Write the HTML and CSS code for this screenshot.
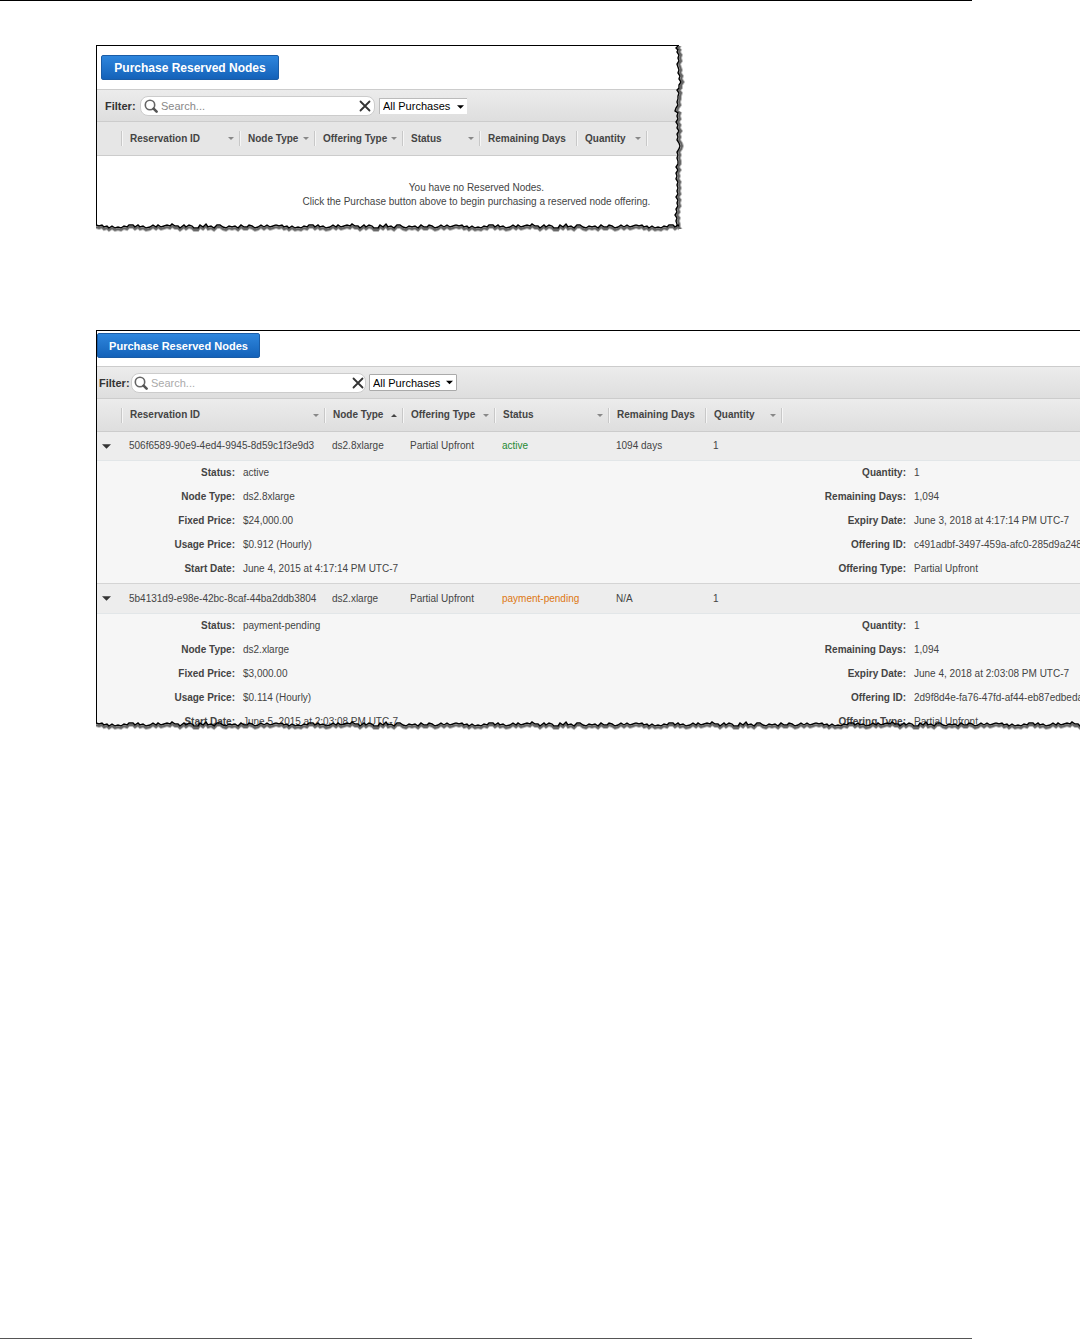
FILE: index.html
```html
<!DOCTYPE html>
<html lang="en">
<head>
<meta charset="utf-8">
<title>Reserved Nodes</title>
<link rel="stylesheet" href="styles.css">
</head>
<body>
<svg class="defs" aria-hidden="true">
  <defs>
    <path id="zig-h" d="M0 4 L3 5 6 4 8 6 11 5 13 7 16 5 19 7 22 6 25 7 28 5 31 6 33 4 37 4 39 6 42 4 44 6 47 5 50 7 54 6 57 4 60 6 62 4 65 6 68 5 71 4 74 5 76 3 79 5 82 5 84 7 88 4 90 6 93 4 96 5 98 7 102 7 104 4 107 6 110 3 112 6 115 5 118 7 121 4 124 4 127 6 130 7 133 5 136 6 139 5 142 7 145 4 148 6 151 6 153 4 156 5 159 7 162 6 165 4 168 6 171 4 174 6 177 5 180 4"/>
    <pattern id="torn-h" width="180" height="16" patternUnits="userSpaceOnUse">
      <path class="paper" d="M0 4 L13 7 54 6 90 6 118 7 145 6 180 4 V16 H0 Z"/>
      <use href="#zig-h" class="tear-shade-soft" y="3"/>
      <use href="#zig-h" class="tear-shade" y="2"/>
      <use href="#zig-h" class="tear"/>
    </pattern>
    <path id="zig-v" d="M4 0 L2 2 4 4 3 6 5 9 4 12 5 15 3 18 4 21 5 24 4 27 6 30 5 33 7 36 5 39 5 42 3 44 5 47 4 50 4 53 3 56 4 59 2 62 1 65 4 67 3 70 4 73 2 76 4 79 3 82 5 85 3 88 4 91 3 94 5 97 6 100 5 103 3 106 4 109 3 112 4 115 4 118 2 121 4 124 2 127 3 130 2 133 4 136 3 139 4 142 3 145 4 148 2 151 4 154 3 157 4 160 2 163 3 166 1 169 3 172 2 175 3 178 3 181 5 184"/>
    <pattern id="torn-v" width="12" height="184" patternUnits="userSpaceOnUse">
      <path class="paper" d="M4 0 L5 24 6 38 3 56 4 79 5 100 3 121 3 145 2 169 4 184 H12 V0 Z"/>
      <use href="#zig-v" class="tear-shade-soft" x="3"/>
      <use href="#zig-v" class="tear-shade" x="2"/>
      <use href="#zig-v" class="tear"/>
    </pattern>
    <symbol id="lens" viewBox="0 0 14 14">
      <circle cx="6" cy="6" r="4.7" fill="#fff" stroke="#666" stroke-width="1.6"/>
      <path d="M9.6 9.6 L12.6 12.6" stroke="#555" stroke-width="2.6" stroke-linecap="round"/>
    </symbol>
    <symbol id="cross" viewBox="0 0 12 12">
      <path d="M1.5 1.5 L10.5 10.5 M10.5 1.5 L1.5 10.5" stroke="#333" stroke-width="1.8" stroke-linecap="round"/>
    </symbol>
    <symbol id="down" viewBox="0 0 8 4"><path d="M0 0 H8 L4 4 Z" fill="currentColor"/></symbol>
    <symbol id="up" viewBox="0 0 8 4"><path d="M0 4 H8 L4 0 Z" fill="currentColor"/></symbol>
  </defs>
</svg>

<main class="page">
  <section class="panel panel-empty">
    <div class="actions"><button class="purchase" type="button">Purchase Reserved Nodes</button></div>
    <form class="toolbar">
      <label class="filter-label" for="search-a">Filter:</label>
      <div class="search">
        <svg class="lens"><use href="#lens"/></svg>
        <input id="search-a" type="text" placeholder="Search...">
        <button class="clear" type="button" aria-label="Clear"><svg><use href="#cross"/></svg></button>
      </div>
      <div class="picker">
        <select aria-label="Purchases"><option>All Purchases</option></select>
        <svg class="picker-arrow"><use href="#down"/></svg>
      </div>
    </form>
    <table class="grid">
      <colgroup><col class="w24"><col class="w118"><col class="w75"><col class="w88"><col class="w77"><col class="w97"><col class="w70"><col></colgroup>
      <thead>
        <tr>
          <td></td>
          <th><span class="head">Reservation ID<svg class="caret"><use href="#down"/></svg></span></th>
          <th><span class="head">Node Type<svg class="caret"><use href="#down"/></svg></span></th>
          <th><span class="head">Offering Type<svg class="caret"><use href="#down"/></svg></span></th>
          <th><span class="head">Status<svg class="caret"><use href="#down"/></svg></span></th>
          <th><span class="head">Remaining Days</span></th>
          <th><span class="head">Quantity<svg class="caret"><use href="#down"/></svg></span></th>
          <td><span class="head"></span></td>
        </tr>
      </thead>
      <tbody>
        <tr><td class="empty" colspan="8">You have no Reserved Nodes.<br>Click the Purchase button above to begin purchasing a reserved node offering.</td></tr>
      </tbody>
    </table>
    <svg class="edge-right"><rect width="12" height="100%" fill="url(#torn-v)"/></svg>
    <svg class="edge-bottom"><rect width="100%" height="16" fill="url(#torn-h)"/></svg>
  </section>

  <section class="panel panel-list">
    <div class="actions"><button class="purchase" type="button">Purchase Reserved Nodes</button></div>
    <form class="toolbar">
      <label class="filter-label" for="search-b">Filter:</label>
      <div class="search">
        <svg class="lens"><use href="#lens"/></svg>
        <input id="search-b" type="text" placeholder="Search...">
        <button class="clear" type="button" aria-label="Clear"><svg><use href="#cross"/></svg></button>
      </div>
      <div class="picker">
        <select aria-label="Purchases"><option>All Purchases</option></select>
        <svg class="picker-arrow"><use href="#down"/></svg>
      </div>
    </form>
    <table class="grid">
      <colgroup><col class="w24"><col class="w203"><col class="w78"><col class="w92"><col class="w114"><col class="w97"><col class="w76"><col></colgroup>
      <thead>
        <tr>
          <td></td>
          <th><span class="head">Reservation ID<svg class="caret"><use href="#down"/></svg></span></th>
          <th><span class="head">Node Type<svg class="caret sorted"><use href="#up"/></svg></span></th>
          <th><span class="head">Offering Type<svg class="caret"><use href="#down"/></svg></span></th>
          <th><span class="head">Status<svg class="caret"><use href="#down"/></svg></span></th>
          <th><span class="head">Remaining Days</span></th>
          <th><span class="head">Quantity<svg class="caret"><use href="#down"/></svg></span></th>
          <td><span class="head"></span></td>
        </tr>
      </thead>
      <tbody>
        <tr class="node">
          <td><button class="toggle" type="button" aria-label="Collapse"><svg><use href="#down"/></svg></button></td>
          <td>506f6589-90e9-4ed4-9945-8d59c1f3e9d3</td><td>ds2.8xlarge</td><td>Partial Upfront</td>
          <td class="ok">active</td><td>1094 days</td><td>1</td><td></td>
        </tr>
        <tr class="details">
          <td colspan="8">
            <div class="facts">
              <dl>
                <dt>Status:</dt><dd>active</dd>
                <dt>Node Type:</dt><dd>ds2.8xlarge</dd>
                <dt>Fixed Price:</dt><dd>$24,000.00</dd>
                <dt>Usage Price:</dt><dd>$0.912 (Hourly)</dd>
                <dt>Start Date:</dt><dd>June 4, 2015 at 4:17:14 PM UTC-7</dd>
              </dl>
              <dl>
                <dt>Quantity:</dt><dd>1</dd>
                <dt>Remaining Days:</dt><dd>1,094</dd>
                <dt>Expiry Date:</dt><dd>June 3, 2018 at 4:17:14 PM UTC-7</dd>
                <dt>Offering ID:</dt><dd>c491adbf-3497-459a-afc0-285d9a248</dd>
                <dt>Offering Type:</dt><dd>Partial Upfront</dd>
              </dl>
            </div>
          </td>
        </tr>
        <tr class="node">
          <td><button class="toggle" type="button" aria-label="Collapse"><svg><use href="#down"/></svg></button></td>
          <td>5b4131d9-e98e-42bc-8caf-44ba2ddb3804</td><td>ds2.xlarge</td><td>Partial Upfront</td>
          <td class="pending">payment-pending</td><td>N/A</td><td>1</td><td></td>
        </tr>
        <tr class="details">
          <td colspan="8">
            <div class="facts">
              <dl>
                <dt>Status:</dt><dd>payment-pending</dd>
                <dt>Node Type:</dt><dd>ds2.xlarge</dd>
                <dt>Fixed Price:</dt><dd>$3,000.00</dd>
                <dt>Usage Price:</dt><dd>$0.114 (Hourly)</dd>
                <dt>Start Date:</dt><dd>June 5, 2015 at 2:03:08 PM UTC-7</dd>
              </dl>
              <dl>
                <dt>Quantity:</dt><dd>1</dd>
                <dt>Remaining Days:</dt><dd>1,094</dd>
                <dt>Expiry Date:</dt><dd>June 4, 2018 at 2:03:08 PM UTC-7</dd>
                <dt>Offering ID:</dt><dd>2d9f8d4e-fa76-47fd-af44-eb87edbeda</dd>
                <dt>Offering Type:</dt><dd>Partial Upfront</dd>
              </dl>
            </div>
          </td>
        </tr>
      </tbody>
    </table>
    <svg class="edge-bottom"><rect width="100%" height="16" fill="url(#torn-h)"/></svg>
  </section>
</main>
</body>
</html>
```
FILE: styles.css
```css
* { box-sizing: border-box; }
html, body { margin: 0; }
body {
  background: #fff;
  color: #444;
  font: 10px/14px "Liberation Sans", Arial, sans-serif;
  min-height: 100vh;
  display: flex;
  flex-direction: column;
}
body::before { content: ""; width: 90%; height: 1px; background: #000; }
body::after { content: ""; width: 90%; height: 1px; background: #555; }
.defs { position: absolute; width: 0; height: 0; }
.page {
  flex: 1;
  display: flex;
  flex-direction: column;
  gap: 96px;
  padding: 44px 0 0 96px;
  overflow: hidden;
}

.panel { position: relative; border: solid #000; border-width: 1px 0 0 1px; white-space: nowrap; }
.panel-empty { width: 583px; }

.actions { padding: 9px 4px; }
.purchase {
  display: block;
  height: 25px;
  width: 178px;
  padding: 0;
  border: 1px solid #1a5ca6;
  border-radius: 2px;
  background: linear-gradient(#2e86dd, #1462b9);
  color: #fff;
  font: bold 12px/16px "Liberation Sans", Arial, sans-serif;
}
.panel-list .actions { padding: 2px 0 8px; }
.panel-list .purchase { width: 163px; font-size: 11px; }

.toolbar {
  display: flex;
  align-items: center;
  gap: 4px;
  height: 33px;
  padding-left: 8px;
  border: solid #ccc;
  border-width: 1px 0;
  background: linear-gradient(#ececec, #dedede);
}
.panel-list .toolbar { gap: 3px; padding-left: 2px; }
.filter-label { width: 31px; font: bold 11px/16px "Liberation Sans", Arial, sans-serif; color: #333; }
.panel-list .filter-label { width: 29px; }
.search {
  display: flex;
  align-items: center;
  gap: 3px;
  width: 235px;
  height: 20px;
  padding: 0 3px;
  border: 1px solid #ccc;
  border-radius: 8px;
  background: #fff;
}
.panel-list .search { padding: 0 1px 0 2px; }
.lens { width: 14px; height: 14px; flex: none; }
.search input {
  flex: 1;
  min-width: 0;
  padding: 0;
  border: 0;
  outline: 0;
  background: none;
  font: 11px/16px "Liberation Sans", Arial, sans-serif;
}
.search input::placeholder { color: #888; }
.panel-list .search input::placeholder { color: #aaa; }
.clear { display: flex; padding: 0; border: 0; background: none; }
.clear svg { width: 12px; height: 12px; }
.picker { position: relative; }
.picker select {
  display: block;
  width: 88px;
  height: 16px;
  padding: 0 0 0 3px;
  appearance: none;
  border: solid #bbb;
  border-width: 1px 0 0 1px;
  border-radius: 0;
  background: #fff;
  color: #000;
  font: 11px/14px "Liberation Sans", Arial, sans-serif;
}
.panel-list .picker select { height: 17px; border: 1px solid #aaa; border-radius: 1px; }
.picker-arrow { position: absolute; right: 3px; top: 7px; width: 7px; height: 4px; color: #000; pointer-events: none; }
.panel-list .picker-arrow { top: 6px; right: 4px; height: 5px; }

.grid { width: 100%; table-layout: fixed; border-collapse: separate; border-spacing: 0; }
.grid td, .grid th { padding: 0; text-align: left; }
.w24 { width: 24px; } .w70 { width: 70px; } .w75 { width: 75px; } .w76 { width: 76px; }
.w77 { width: 77px; } .w78 { width: 78px; } .w88 { width: 88px; } .w92 { width: 92px; }
.w97 { width: 97px; } .w114 { width: 114px; } .w118 { width: 118px; } .w203 { width: 203px; }
.grid thead td, .grid thead th { height: 34px; border-bottom: 1px solid #ccc; background: #e6e6e6; }
.panel-list .grid thead td, .panel-list .grid thead th { height: 33px; background: linear-gradient(#ececec, #dedede); }
.head {
  display: flex;
  align-items: center;
  justify-content: space-between;
  height: 15px;
  padding: 0 5px 0 8px;
  border-left: 1px solid #c8c8c8;
  box-shadow: inset 1px 0 #f6f6f6;
  color: #444;
}
.caret { flex: none; width: 6px; height: 3px; color: #888; }
.caret.sorted { color: #444; }
.grid .empty { height: 78px; padding: 0 0 0 177px; text-align: center; }

.node td { height: 29px; border-bottom: 1px solid #e2e6e8; background: #ededed; }
.grid .node td + td { padding-left: 8px; }
.grid .node td:first-child { padding-left: 5px; }
.details + .node td { height: 31px; border-top: 1px solid #d4d4d4; }
.toggle { display: flex; padding: 0; border: 0; background: none; color: #333; }
.toggle svg { width: 9px; height: 5px; }
.ok { color: #1f8a33; }
.pending { color: #dd7711; }
.details td { background: #f6f6f6; }
.facts { display: grid; grid-template-columns: 671px 1fr; padding: 0 0 2px; }
.details:last-child .facts { padding: 0; }
.facts dl { display: grid; grid-template-columns: 138px 1fr; column-gap: 8px; margin: 0; line-height: 24px; }
.facts dt { font-weight: bold; text-align: right; }
.facts dd { margin: 0; }

.edge-bottom { position: absolute; left: -1px; bottom: -3px; width: calc(100% + 1px); height: 16px; }
.panel-list .edge-bottom { bottom: -1px; }
.edge-right { position: absolute; right: -7px; top: 0; width: 12px; height: calc(100% - 5px); }
.paper { fill: #fff; }
.tear, .tear-shade, .tear-shade-soft { fill: none; stroke: #000; stroke-width: 1.4; }
.tear-shade { stroke: #666; stroke-width: 2; }
.tear-shade-soft { stroke: #bbb; stroke-width: 2; }
```
